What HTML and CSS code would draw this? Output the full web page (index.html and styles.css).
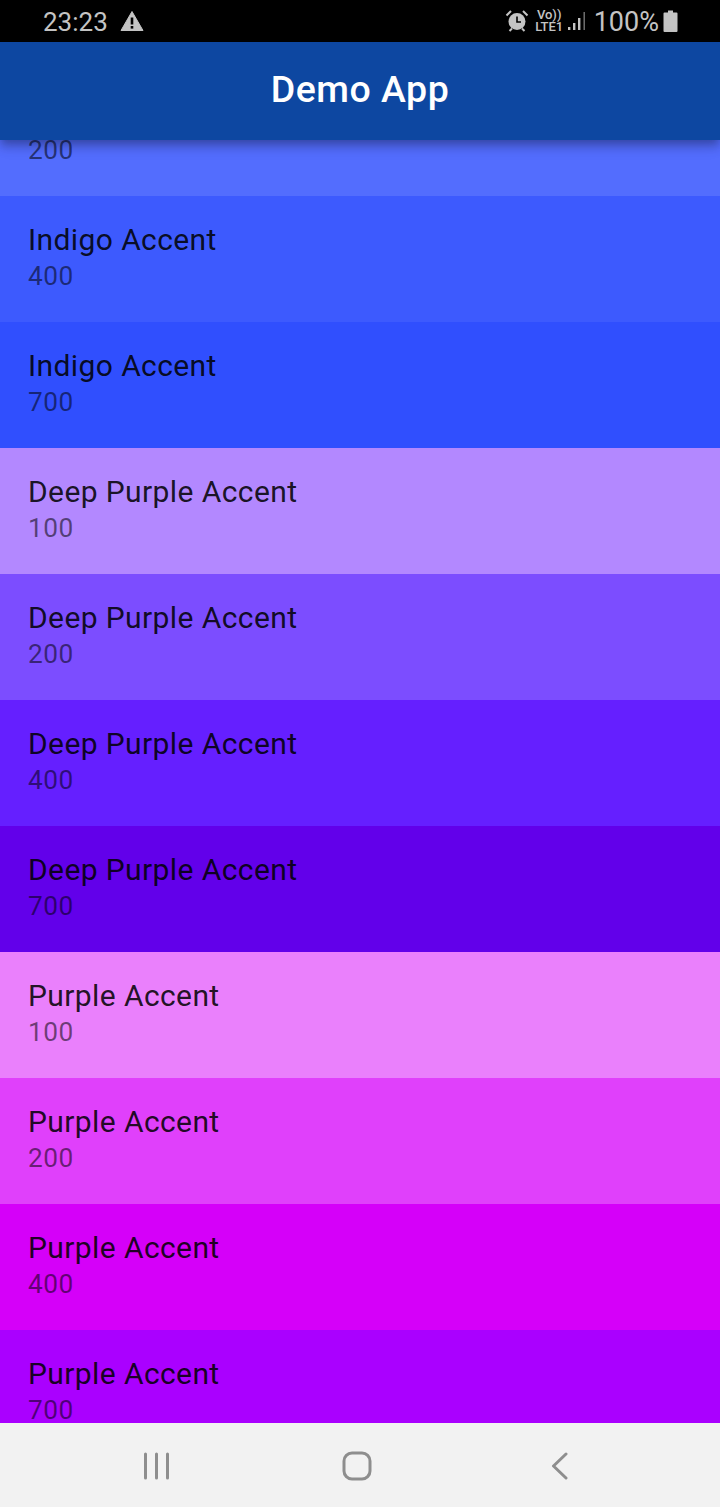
FILE: index.html
```html
<!DOCTYPE html>
<html lang="en">
<head>
    <meta charset="UTF-8">
    <title>Demo App</title>
    <link rel="stylesheet" href="styles.css">
</head>
<body>

<div id="status-bar">
    <div class="status-left">
        <span class="clock">23:23</span>
        <svg class="warn-icon" width="24" height="22" viewBox="0 0 24 22">
            <path d="M12 1.5 L23 20.5 H1 Z" fill="#c4c4c4" stroke="#c4c4c4" stroke-width="1" stroke-linejoin="round"/>
            <rect x="10.7" y="7.5" width="2.6" height="7" fill="#000"/>
            <rect x="10.7" y="16" width="2.6" height="2.6" fill="#000"/>
        </svg>
    </div>
    <div class="status-right">
        <svg class="alarm" width="24" height="24" viewBox="0 0 24 24">
            <circle cx="12" cy="12.5" r="8.5" fill="#c4c4c4"/>
            <path d="M12 7.5 V13 H16" fill="none" stroke="#000" stroke-width="1.6"/>
            <path d="M1.5 6.5 L6 2 M22.5 6.5 L18 2 M4.5 22 L7 19.5 M19.5 22 L17 19.5" stroke="#c4c4c4" stroke-width="2"/>
        </svg>
        <div class="volte"><span>Vo))</span><span>LTE1</span></div>
        <svg class="signal" width="20" height="22" viewBox="0 0 20 22">
            <rect x="1" y="17" width="2.4" height="3" fill="#c4c4c4"/>
            <rect x="6" y="13" width="2.4" height="7" fill="#c4c4c4"/>
            <rect x="11" y="8" width="2.4" height="12" fill="#c4c4c4"/>
            <rect x="16.5" y="2" width="1.4" height="18" fill="#777"/>
        </svg>
        <span class="battery-text">100%</span>
        <svg class="battery" width="15" height="22" viewBox="0 0 14 22">
            <path d="M4.5 0.5 H9.5 V2.5 H13 Q14 2.5 14 3.5 V21 Q14 22 13 22 H1 Q0 22 0 21 V3.5 Q0 2.5 1 2.5 H4.5 Z" fill="#c4c4c4"/>
        </svg>
    </div>
</div>

<div id="app-bar">Demo App</div>

<div id="list">
    <div class="row first" style="background-color: #536dfe"><div class="name">Indigo Accent</div><div class="shade">200</div></div>
    <div class="row" style="background-color: #3d5afe"><div class="name">Indigo Accent</div><div class="shade">400</div></div>
    <div class="row" style="background-color: #304ffe"><div class="name">Indigo Accent</div><div class="shade">700</div></div>
    <div class="row" style="background-color: #b388ff"><div class="name">Deep Purple Accent</div><div class="shade">100</div></div>
    <div class="row" style="background-color: #7c4dff"><div class="name">Deep Purple Accent</div><div class="shade">200</div></div>
    <div class="row" style="background-color: #651fff"><div class="name">Deep Purple Accent</div><div class="shade">400</div></div>
    <div class="row" style="background-color: #6200ea"><div class="name">Deep Purple Accent</div><div class="shade">700</div></div>
    <div class="row" style="background-color: #ea80fc"><div class="name">Purple Accent</div><div class="shade">100</div></div>
    <div class="row" style="background-color: #e040fb"><div class="name">Purple Accent</div><div class="shade">200</div></div>
    <div class="row" style="background-color: #d500f9"><div class="name">Purple Accent</div><div class="shade">400</div></div>
    <div class="row" style="background-color: #aa00ff"><div class="name">Purple Accent</div><div class="shade">700</div></div>
</div>

<div id="nav-bar">
    <svg width="26" height="28" viewBox="0 0 26 28">
        <path d="M2.5 2 V26 M13.5 2 V26 M24.5 2 V26" fill="none" stroke="#8e8e8e" stroke-width="3" stroke-linecap="round"/>
    </svg>
    <svg class="nav-home" width="30" height="30" viewBox="0 0 30 30">
        <rect x="2" y="2" width="26" height="26" rx="8" fill="none" stroke="#8e8e8e" stroke-width="3"/>
    </svg>
    <svg class="nav-back" width="20" height="28" viewBox="0 0 20 28">
        <path d="M17 2 L4.5 14 L17 26" fill="none" stroke="#8e8e8e" stroke-width="3" stroke-linecap="round" stroke-linejoin="round"/>
    </svg>
</div>

</body>
</html>
```

FILE: styles.css
```css
html, body {
    margin: 0;
    height: 100%;
}
body {
    font-family: Roboto, sans-serif;
    display: flex;
    flex-direction: column;
    height: 1507px;
    overflow: hidden;
}
#status-bar {
    height: 42px;
    flex: none;
    background-color: #000;
    color: #c4c4c4;
    display: flex;
    justify-content: space-between;
    align-items: center;
    padding: 0 42px 0 43px;
}
.status-left, .status-right {
    display: flex;
    align-items: center;
}
.clock {
    font-size: 26px;
    line-height: 44px;
    padding-top: 2px;
    margin-right: 12px;
}
.alarm {
    margin-right: 7px;
}
.volte {
    display: flex;
    flex-direction: column;
    width: 27px;
    font-size: 13px;
    line-height: 12px;
    font-weight: 500;
    align-items: center;
    margin-right: 4px;
}
.signal {
    margin-right: 7px;
}
.battery-text {
    font-size: 27px;
    line-height: 44px;
    padding-top: 2px;
    margin-right: 4px;
}
#app-bar {
    height: 98px;
    flex: none;
    background-color: #0d47a1;
    color: white;
    font-size: 37.5px;
    letter-spacing: 0.5px;
    font-weight: 500;
    line-height: 94px;
    text-align: center;
    box-shadow: 0 4px 8px -2px rgba(0, 0, 0, 0.2), 0 8px 9px rgba(0, 0, 0, 0.14), 0 2px 19px rgba(0, 0, 0, 0.12);
    position: relative;
    z-index: 1;
}
#list {
    flex: 1;
    overflow: hidden;
}
.row {
    height: 126px;
    box-sizing: border-box;
    padding: 26px 28px 0;
}
.row.first {
    margin-top: -70px;
}
.name {
    font-size: 30px;
    letter-spacing: 0.4px;
    line-height: 36px;
    color: rgba(0, 0, 0, 0.87);
}
.shade {
    font-size: 26.25px;
    letter-spacing: 0.47px;
    line-height: 36px;
    color: rgba(0, 0, 0, 0.54);
}
#nav-bar {
    height: 84px;
    flex: none;
    box-sizing: border-box;
    padding: 2px 0 0 143px;
    background-color: #f2f2f2;
    display: flex;
    align-items: center;
}
.nav-home {
    margin-left: 173px;
}
.nav-back {
    margin-left: 177px;
}
```
